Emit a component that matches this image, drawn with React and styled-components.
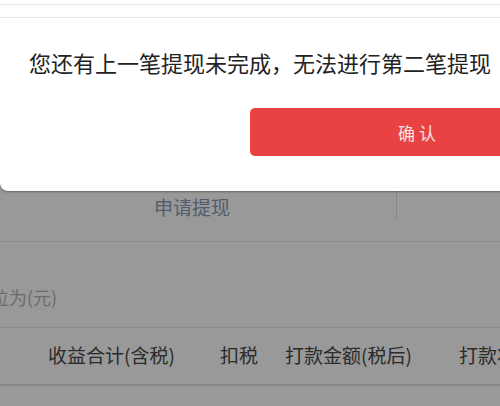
import React from 'react';
import styled, { createGlobalStyle } from 'styled-components';

const GlobalStyle = createGlobalStyle`
  body {
    margin: 0;
    overflow: hidden;
    font-family: "Noto Sans CJK SC", "Noto Sans", sans-serif;
  }
`;

const Screen = styled.div`
  position: relative;
  width: 500px;
  height: 406px;
  overflow: hidden;
  background-color: #ffffff;
`;

const Page = styled.div`
  display: flex;
  flex-direction: column;
  padding-top: 175px;
`;

const ActionRow = styled.div`
  display: flex;
  height: 66px;
  border-bottom: 1px solid #e6e6e6;
`;

const ActionCell = styled.div`
  display: flex;
  align-items: center;
  justify-content: center;
  width: 397px;
  padding-right: 12px;
  box-sizing: border-box;
  border-right: 1px solid #e2e2e2;
  margin-bottom: 22px;
  padding-top: 18px;
`;

const ActionLink = styled.span`
  font-size: 19px;
  color: #8a9ab4;
`;

const UnitRow = styled.div`
  display: flex;
  align-items: flex-end;
  height: 86px;
  padding-bottom: 17px;
  box-sizing: border-box;
  border-bottom: 1px solid #e6e6e6;
`;

const UnitText = styled.span`
  margin-left: -27px;
  font-size: 18px;
  line-height: 26px;
  color: #b4b4b4;
`;

const TableHead = styled.div`
  display: grid;
  grid-template-columns: 172px 65px 174px auto;
  align-items: center;
  height: 58px;
  padding: 0 0 4px 48px;
  box-sizing: border-box;
  border-bottom: 2px solid #e2e2e2;
  white-space: nowrap;
`;

const HeadCell = styled.span`
  font-size: 19px;
  color: #484848;
`;

const Mask = styled.div`
  position: absolute;
  inset: 0;
  background-color: rgba(0, 0, 0, 0.4);
`;

const Dialog = styled.div`
  position: absolute;
  top: 0;
  left: 0;
  width: 640px;
  display: flex;
  flex-direction: column;
  background-color: #ffffff;
  border-radius: 0 0 8px 8px;
  box-shadow: 0 1px 2px rgba(0, 0, 0, 0.35);
  padding-bottom: 35px;
`;

const Rule = styled.div`
  height: ${(p) => p.gap}px;
  border-bottom: 1px solid #e6e6e6;
`;

const Message = styled.p`
  margin: 29px 0 0 0;
  padding-left: 29px;
  font-size: 22px;
  line-height: 30px;
  color: #222222;
  white-space: nowrap;
`;

const ButtonRow = styled.div`
  display: flex;
  padding-left: 250px;
  margin-top: 31px;
`;

const ConfirmButton = styled.button`
  width: 334px;
  height: 48px;
  border: none;
  border-radius: 5px;
  background-color: #e84243;
  color: #f9e4e4;
  font-family: inherit;
  font-size: 17px;
  cursor: pointer;
`;

const columns = ['收益合计(含税)', '扣税', '打款金额(税后)', '打款状态'];

const App = () => {
  return (
    <Screen>
      <GlobalStyle />
      <Page>
        <ActionRow>
          <ActionCell>
            <ActionLink>申请提现</ActionLink>
          </ActionCell>
        </ActionRow>
        <UnitRow>
          <UnitText>单位为(元)</UnitText>
        </UnitRow>
        <TableHead>
          {columns.map((c) => (
            <HeadCell key={c}>{c}</HeadCell>
          ))}
        </TableHead>
      </Page>
      <Mask />
      <Dialog>
        <Rule gap={4} />
        <Rule gap={12} />
        <Message>您还有上一笔提现未完成，无法进行第二笔提现</Message>
        <ButtonRow>
          <ConfirmButton>确 认</ConfirmButton>
        </ButtonRow>
      </Dialog>
    </Screen>
  );
};

export default App;
